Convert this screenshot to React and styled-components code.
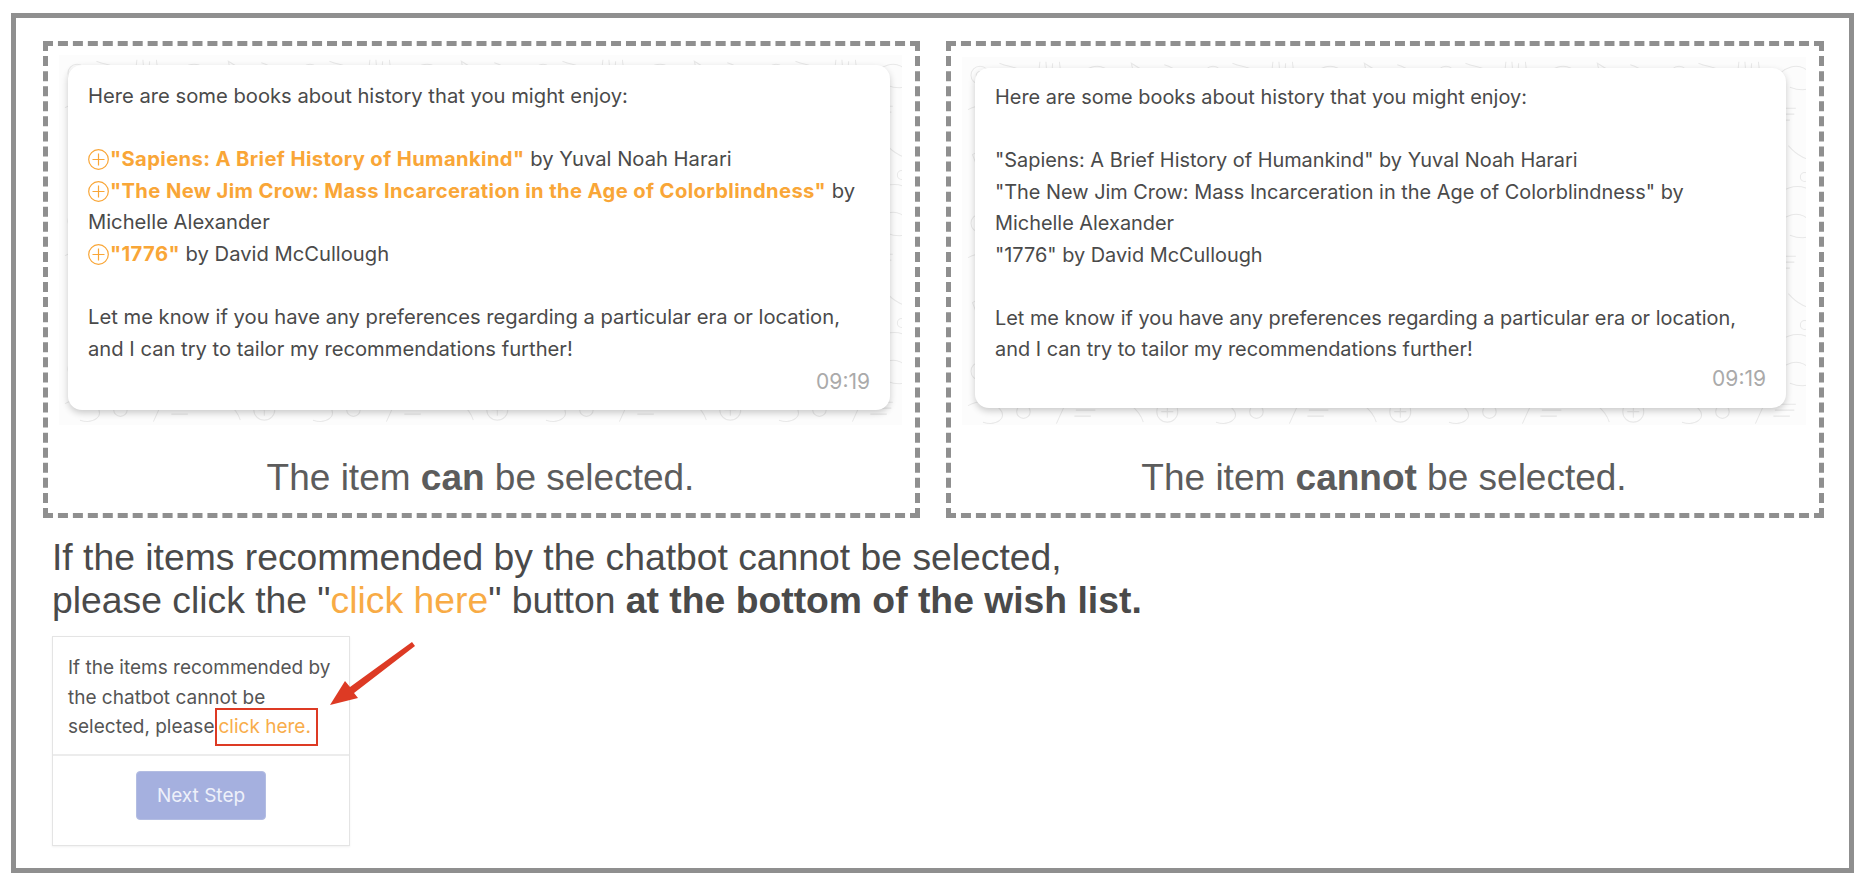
import React from "react";
import styled, { createGlobalStyle } from "styled-components";

const Global = createGlobalStyle`
  html, body { margin: 0; padding: 0; background: #fff; }
  body { font-family: "Liberation Sans", Arial, sans-serif; color: #4a4a4a; }
`;

const doodleSvg = `<svg xmlns='http://www.w3.org/2000/svg' width='233' height='148' viewBox='0 0 311 197' fill='none' stroke='#e8e8e8' stroke-width='1.4'>
<circle cx='24' cy='24' r='12'/><circle cx='24' cy='24' r='5'/><path d='M50 8c14 6 24 4 36 14s-6 20-20 14'/><path d='M104 6l-3 26M112 6l2 26M121 8l-2 24M130 6l3 26'/><path d='M150 34c12-22 34-30 50-12s-6 26-28 18'/><path d='M226 8l26 16-18 20z'/><path d='M270 10c14 4 26 14 30 30'/>
<path d='M8 70c16-8 30-8 42 4s-4 24-22 18'/><circle cx='82' cy='78' r='9'/><path d='M112 62l24 10-10 22M150 68h30M152 76h26M150 84h22'/><path d='M200 62c20 0 36 12 42 30'/><circle cx='274' cy='78' r='14'/><path d='M266 78h16M274 70v16'/>
<path d='M14 130l18-10 14 22-22 14z'/><path d='M68 122l-2 34M77 120l1 36M86 124l-2 30M95 120l2 36M104 124l-1 30'/><circle cx='140' cy='138' r='14'/><path d='M170 118c12 14 26 22 46 20M226 120c10 10 26 14 36 34'/><circle cx='192' cy='160' r='6'/><path d='M276 128l20 6-6 22-20-6z'/>
<path d='M30 178c18-8 34 8 52 0M110 172l18 18M128 172l-18 18M160 180c14-10 30-10 44 0M232 174h34M240 184h22'/></svg>`;

const Frame = styled.div`
  box-sizing: border-box;
  margin: 13px 14px 15px 11px;
  height: 860px;
  border: 5px solid #8f8f8f;
  padding: 23px 25px 0 27px;
`;

const Panels = styled.div`
  display: flex;
  gap: 26px;
`;

const Panel = styled.section`
  box-sizing: border-box;
  width: ${(p) => p.$width}px;
  height: 477px;
  border: 5px dashed #8f8f8f;
  padding: ${(p) => p.$top}px 13px 0 11px;
  text-align: center;
`;

const Wallpaper = styled.div`
  box-sizing: border-box;
  height: ${(p) => p.$height}px;
  padding: ${(p) => p.$pad};
  background-color: #fcfcfc;
  background-image: url("data:image/svg+xml,${encodeURIComponent(doodleSvg)}");
`;

const Bubble = styled.div`
  box-sizing: border-box;
  display: flex;
  flex-direction: column;
  height: 100%;
  padding: ${(p) => p.$top}px 20px ${(p) => p.$tail}px;
  background: #fff;
  border-radius: 14px;
  box-shadow: 0 3px 7px rgba(0, 0, 0, 0.2);
  font: 400 ${(p) => p.$size}px/${(p) => p.$leading}px Inter, sans-serif;
  color: #4a4a4a;
  text-align: left;
`;

const Line = styled.div`
  min-height: 1lh;
  white-space: nowrap;
`;

const Pick = styled.span`
  font-weight: 700;
  letter-spacing: 0.38px;
  color: #f9a637;
`;

const PlusIcon = styled.svg`
  width: 21px;
  height: 21px;
  margin-right: 1px;
  vertical-align: -4px;
`;

const Time = styled.div`
  margin-top: auto;
  text-align: right;
  font-size: 21px;
  line-height: 26px;
  color: #aaaaaa;
`;

const Caption = styled.div`
  margin-top: 31px;
  font-size: 37px;
  line-height: 44px;
  color: #5c5c5c;
`;

const Notice = styled.p`
  margin: 18px 0 0 9px;
  font-size: 37.3px;
  line-height: 43px;
  color: #4a4a4a;
`;

const Hot = styled.span`
  color: #f8ab45;
`;

const WishBox = styled.div`
  position: relative;
  box-sizing: border-box;
  margin: 14px 0 0 9px;
  width: 298px;
  height: 210px;
  border: 1px solid #e4e4e4;
  box-shadow: 0 1px 2px rgba(0, 0, 0, 0.06);
  font-family: Inter, sans-serif;
`;

const WishText = styled.div`
  box-sizing: border-box;
  height: 119px;
  padding: 16px 15px 0 15px;
  border-bottom: 2px solid #ececec;
  font-size: 19px;
  line-height: 29.7px;
  color: #555;
  white-space: nowrap;
`;

const WishLink = styled.span`
  position: relative;
  color: #f8ad4b;
  margin-left: 4px;
`;

const RedBox = styled.span`
  position: absolute;
  left: -3px;
  top: -7px;
  width: 103px;
  height: 38px;
  box-sizing: border-box;
  border: 2px solid #dd3a24;
`;

const ButtonRow = styled.div`
  display: flex;
  justify-content: center;
  padding-top: 15px;
`;

const NextButton = styled.button`
  width: 130px;
  height: 49px;
  border: 1px solid #b3bde2;
  border-radius: 4px;
  background: #a5b0df;
  color: #eef0fa;
  font: 400 19px Inter, sans-serif;
`;

const Arrow = styled.svg`
  position: absolute;
  left: 270px;
  top: 1px;
  width: 100px;
  height: 80px;
`;

const PlusCircle = () => (
  <PlusIcon viewBox="0 0 21 21" fill="none" stroke="#f9a637" strokeWidth="1.2">
    <circle cx="10.5" cy="10.5" r="9.8" />
    <path d="M10.5 4.5v12M4.5 10.5h12" />
  </PlusIcon>
);

const Book = ({ title, rest, picks }) => (
  <>
    {picks ? (
      <>
        <PlusCircle />
        <Pick>{title}</Pick>
      </>
    ) : (
      title
    )}
    {rest}
  </>
);

const Message = ({ picks }) => (
  <>
    <Line>Here are some books about history that you might enjoy:</Line>
    <Line />
    <Line>
      <Book picks={picks} title={'"Sapiens: A Brief History of Humankind"'} rest=" by Yuval Noah Harari" />
    </Line>
    <Line>
      <Book picks={picks} title={'"The New Jim Crow: Mass Incarceration in the Age of Colorblindness"'} rest=" by" />
    </Line>
    <Line>Michelle Alexander</Line>
    <Line>
      <Book picks={picks} title={'"1776"'} rest=" by David McCullough" />
    </Line>
    <Line />
    <Line>Let me know if you have any preferences regarding a particular era or location,</Line>
    <Line>and I can try to tailor my recommendations further!</Line>
    <Time>09:19</Time>
  </>
);

export default function App() {
  return (
    <>
      <Global />
      <Frame>
        <Panels>
          <Panel $width={877} $top={9}>
            <Wallpaper $height={370} $pad="10px 12px 15px 9px">
              <Bubble $top={15} $tail={15} $size={20.2} $leading={31.6}>
                <Message picks />
              </Bubble>
            </Wallpaper>
            <Caption>
              The item <b>can</b> be selected.
            </Caption>
          </Panel>
          <Panel $width={878} $top={11}>
            <Wallpaper $height={368} $pad="11px 20px 17px 13px">
              <Bubble $top={14} $tail={16} $size={19.9} $leading={31.5}>
                <Message />
              </Bubble>
            </Wallpaper>
            <Caption>
              The item <b>cannot</b> be selected.
            </Caption>
          </Panel>
        </Panels>
        <Notice>
          If the items recommended by the chatbot cannot be selected,
          <br />
          please click the "<Hot>click here</Hot>" button <b>at the bottom of the wish list.</b>
        </Notice>
        <WishBox>
          <WishText>
            If the items recommended by
            <br />
            the chatbot cannot be
            <br />
            selected, please
            <WishLink>
              click here.
              <RedBox />
            </WishLink>
          </WishText>
          <ButtonRow>
            <NextButton>Next Step</NextButton>
          </ButtonRow>
          <Arrow viewBox="0 0 100 80">
            <path d="M89 4 L92 8 L31 55 L35 60 L7 67 L22 43 L27 49 Z" fill="#dd3a24" />
          </Arrow>
        </WishBox>
      </Frame>
    </>
  );
}
